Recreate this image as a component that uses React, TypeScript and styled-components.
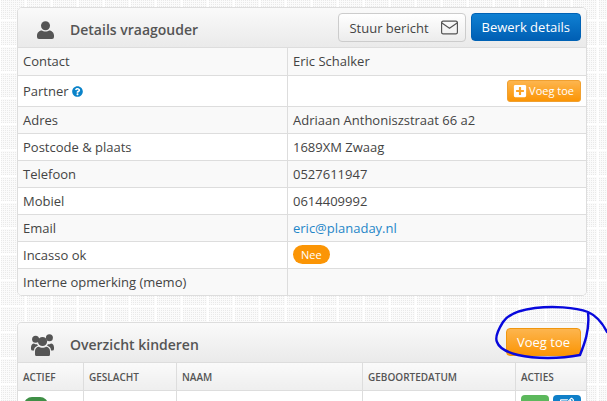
import React from "react";
import styled, { createGlobalStyle } from "styled-components";
import { FaPlusSquare, FaQuestionCircle, FaRegEdit } from "react-icons/fa";
import { FiMail } from "react-icons/fi";

const details = [
  { label: "Contact", value: "Eric Schalker" },
  { label: "Partner", help: true, add: true },
  { label: "Adres", value: "Adriaan Anthoniszstraat 66 a2" },
  { label: "Postcode & plaats", value: "1689XM Zwaag" },
  { label: "Telefoon", value: "0527611947" },
  { label: "Mobiel", value: "0614409992" },
  { label: "Email", email: "eric@planaday.nl" },
  { label: "Incasso ok", badge: "Nee" },
  { label: "Interne opmerking (memo)" },
];

const UserIcon = () => (
  <svg width="17" height="18" viewBox="0 0 17 18" fill="currentColor">
    <circle cx="8.5" cy="4.7" r="4.5" />
    <path d="M0 14.5C0 11.5 2.5 9.5 5 9.5C6.5 10.8 10.5 10.8 12 9.5C14.5 9.5 17 11.5 17 14.5V16Q17 18 15 18H2Q0 18 0 16Z" />
  </svg>
);

const GroupIcon = () => (
  <svg width="23" height="22" viewBox="0 0 23 22" fill="currentColor">
    <circle cx="4.6" cy="5.2" r="3.5" />
    <circle cx="18.4" cy="3.8" r="3.5" />
    <circle cx="11.5" cy="7.5" r="4.6" />
    <path d="M4 20.5V17C4 14.5 6 12.8 8 12.8C9.5 14.2 13.5 14.2 15 12.8C17 12.8 19 14.5 19 17V20.5Q19 22 17.5 22H5.5Q4 22 4 20.5Z" />
    <path d="M0 13.5C0 11 1.5 9.5 3 9.5C4.5 10.5 5.5 10.5 6.2 10.2C6.4 11 6.6 11.3 7 11.8C4.2 12.5 3 14 3 16.5H1.5Q0 16.5 0 15Z" />
    <path d="M23 13.5C23 11 21.5 9.5 20 9.5C18.5 10.5 17.5 10.5 16.8 10.2C16.6 11 16.4 11.3 16 11.8C18.8 12.5 20 14 20 16.5H21.5Q23 16.5 23 15Z" />
  </svg>
);

const App: React.FC = () => {
  return (
    <Page>
      <GlobalStyle />
      <Panel>
        <PanelHeader>
          <TitleIcon $left={7}>
            <UserIcon />
          </TitleIcon>
          <Title>Details vraagouder</Title>
          <HeaderActions>
            <LightButton>
              Stuur bericht
              <FiMail size={19} strokeWidth={1.5} />
            </LightButton>
            <BlueButton>Bewerk details</BlueButton>
          </HeaderActions>
        </PanelHeader>
        <DetailTable>
          <tbody>
            {details.map((row) => (
              <DetailRow key={row.label} $tall={!!row.add}>
                <LabelCell>
                  {row.label}
                  {row.help && (
                    <HelpIcon>
                      <FaQuestionCircle size={11} />
                    </HelpIcon>
                  )}
                </LabelCell>
                <ValueCell>
                  {row.value}
                  {row.email && <MailLink>{row.email}</MailLink>}
                  {row.badge && <Badge>{row.badge}</Badge>}
                  {row.add && (
                    <SmallOrangeButton>
                      <FaPlusSquare size={14} />
                      Voeg toe
                    </SmallOrangeButton>
                  )}
                </ValueCell>
              </DetailRow>
            ))}
          </tbody>
        </DetailTable>
      </Panel>

      <LastPanel>
        <PanelHeader>
          <TitleIcon $left={1}>
            <GroupIcon />
          </TitleIcon>
          <Title>Overzicht kinderen</Title>
          <HeaderActions>
            <OrangeButton>Voeg toe</OrangeButton>
          </HeaderActions>
        </PanelHeader>
        <KidsTable>
          <thead>
            <tr>
              <HeadCell $width={66}>Actief</HeadCell>
              <HeadCell $width={93}>Geslacht</HeadCell>
              <HeadCell $width={186}>Naam</HeadCell>
              <HeadCell $width={153}>Geboortedatum</HeadCell>
              <HeadCell>Acties</HeadCell>
            </tr>
          </thead>
          <tbody>
            <tr>
              <BodyCell>
                <Toggle />
              </BodyCell>
              <BodyCell />
              <BodyCell />
              <BodyCell />
              <BodyCell>
                <ActionGroup>
                  <ActionButton $color="#5cb85c" />
                  <ActionButton $color="#0f7fc8">
                    <FaRegEdit size={14} />
                  </ActionButton>
                </ActionGroup>
              </BodyCell>
            </tr>
          </tbody>
        </KidsTable>
      </LastPanel>

      <Scribble viewBox="0 0 607 401" fill="none">
        <path
          d="M607 332C602 322 597 316 588 312C575 307 552 306 535 308C520 310 508 314 503 322C498 330 495 338 497 342C499 348 506 352 518 355C535 359 560 359 580 355C584 345 590 330 588 313"
          stroke="#0808dc"
          strokeWidth="2.4"
          strokeLinecap="round"
        />
      </Scribble>
    </Page>
  );
};

export default App;

const GlobalStyle = createGlobalStyle`
  html, body {
    margin: 0;
    height: 100%;
    overflow: hidden;
  }

  body {
    font-family: "Open Sans", "Liberation Sans", sans-serif;
    font-size: 13px;
    color: #444;
    background-color: #fbfbfb;
    background-image:
      linear-gradient(90deg, #fff 2px, transparent 2px),
      linear-gradient(#fff 2px, transparent 2px),
      conic-gradient(#e9e9e9 25%, #fbfbfb 0);
    background-size: 26px 26px, 26px 26px, 2px 2px;
    background-position: 25px 0, 0 19px, 0 0;
  }
`;

const Page = styled.div`
  position: relative;
  width: 607px;
  height: 401px;
  box-sizing: border-box;
  padding: 7px 20px 0 17px;
  overflow: hidden;
`;

const Panel = styled.section`
  border: 1px solid #ddd;
  border-radius: 5px;
  background: #fff;
  overflow: hidden;
  margin-bottom: 26px;
`;

const LastPanel = styled(Panel)`
  margin-bottom: 0;
  border-bottom: 0;
  border-radius: 5px 5px 0 0;
`;

const PanelHeader = styled.header`
  display: flex;
  align-items: center;
  height: 39px;
  padding: 0 5px 0 12px;
  background: linear-gradient(#fafafa, #eaeaea);
  border-bottom: 1px solid #ddd;
`;

const TitleIcon = styled.span<{ $left: number }>`
  display: flex;
  margin: 4px 16px 0 ${(p) => p.$left}px;
  color: #555;
`;

const Title = styled.h2`
  margin: 4px 0 0;
  font-size: 14px;
  font-weight: 600;
  color: #555;
`;

const HeaderActions = styled.div`
  display: flex;
  align-self: flex-start;
  gap: 5px;
  margin: 5px 0 0 auto;
`;

const LightButton = styled.button`
  display: flex;
  align-items: center;
  gap: 11px;
  height: 29px;
  padding: 0 6px 0 10px;
  font: inherit;
  color: #444;
  border: 1px solid #ccc;
  border-radius: 4px;
  background: linear-gradient(#fff, #ececec);

  svg {
    color: #555;
  }
`;

const BlueButton = styled.button`
  height: 28px;
  padding: 0 10px;
  font: inherit;
  color: #fff;
  border: 1px solid #0062b5;
  border-radius: 4px;
  background: linear-gradient(#0f80d2, #005fb4);
`;

const OrangeButton = styled.button`
  height: 28px;
  padding: 0 10px;
  font: inherit;
  color: #fff;
  border: 1px solid #f0960e;
  border-radius: 4px;
  background: linear-gradient(#fdb54e, #fb9505);
`;

const SmallOrangeButton = styled.button`
  display: inline-flex;
  align-items: center;
  gap: 2px;
  float: right;
  height: 22px;
  padding: 0 6px 0 5px;
  font: inherit;
  font-size: 11px;
  color: #fff;
  border: 1px solid #f0a030;
  border-radius: 3px;
  background: linear-gradient(#fdb54e, #fb9505);
`;

const DetailTable = styled.table`
  width: 100%;
  border-collapse: collapse;
  table-layout: fixed;
`;

const DetailRow = styled.tr<{ $tall: boolean }>`
  height: ${(p) => (p.$tall ? 31 : 27)}px;

  &:nth-child(odd) {
    background: #f9f9f9;
  }
`;

const LabelCell = styled.td`
  width: 259px;
  padding: 0 5px;
  border-right: 1px solid #ddd;
  border-bottom: 1px solid #ddd;

  tr:last-child & {
    border-bottom: 0;
  }
`;

const ValueCell = styled.td`
  padding: 0 5px;
  border-bottom: 1px solid #ddd;

  tr:last-child & {
    border-bottom: 0;
  }
`;

const HelpIcon = styled.span`
  display: inline-flex;
  margin-left: 3px;
  vertical-align: -1px;
  color: #0a83c9;
`;

const MailLink = styled.a`
  color: #1f86c8;
`;

const Badge = styled.span`
  display: inline-block;
  padding: 1px 8px;
  font-size: 11px;
  line-height: 17px;
  color: #fff;
  border-radius: 10px;
  background: #fb9505;
`;

const KidsTable = styled.table`
  width: 100%;
  border-collapse: collapse;
  table-layout: fixed;
`;

const HeadCell = styled.th<{ $width?: number }>`
  width: ${(p) => (p.$width ? `${p.$width - 11}px` : "auto")};
  height: 27px;
  padding: 0 5px;
  font-size: 10px;
  font-weight: 600;
  text-align: left;
  text-transform: uppercase;
  color: #555;
  border-right: 1px solid #ddd;
  border-bottom: 1px solid #ddd;
  background: linear-gradient(#fafafa, #eeeeee);

  &:last-child {
    border-right: 0;
  }
`;

const BodyCell = styled.td`
  height: 40px;
  padding: 4px 5px;
  vertical-align: top;
  border-right: 1px solid #ddd;

  &:last-child {
    border-right: 0;
  }
`;

const Toggle = styled.span`
  display: block;
  width: 24px;
  height: 16px;
  margin: 2px 0 0 1px;
  border-radius: 8px;
  background: #3f8f46;
`;

const ActionGroup = styled.div`
  display: flex;
  gap: 4px;
`;

const ActionButton = styled.span<{ $color: string }>`
  display: flex;
  justify-content: center;
  width: 28px;
  height: 20px;
  padding-top: 2px;
  border-radius: 4px;
  color: #fff;
  background: ${(p) => p.$color};
`;

const Scribble = styled.svg`
  position: absolute;
  top: 0;
  left: 0;
  width: 607px;
  height: 401px;
  pointer-events: none;
`;
